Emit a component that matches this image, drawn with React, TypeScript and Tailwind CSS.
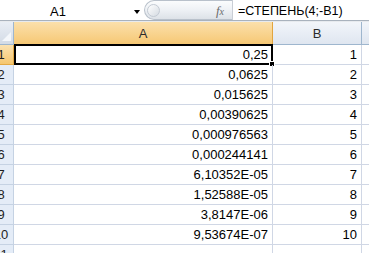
import React from "react";

const values = [
  "0,25",
  "0,0625",
  "0,015625",
  "0,00390625",
  "0,000976563",
  "0,000244141",
  "6,10352E-05",
  "1,52588E-05",
  "3,8147E-06",
  "9,53674E-07",
];

const RowHead = ({ n, active }: { n: number | string; active?: boolean }) => (
  <div
    className={`w-[14px] shrink-0 overflow-hidden border-r border-b ${
      active
        ? "border-[#e3a945] bg-gradient-to-b from-[#fbe2b0] to-[#f5c66e]"
        : "border-[#c5d2e3] bg-[#e4ecf7]"
    }`}
  >
    <div className="-ml-[12px] w-[26px] text-center text-[13px] leading-[19px] text-[#1e1e1e]">
      {n}
    </div>
  </div>
);

export default function App() {
  return (
    <div className="relative h-[253px] w-[369px] overflow-hidden bg-white font-['Liberation_Sans',Arial,sans-serif] text-black">
      {/* formula bar */}
      <div className="flex h-[21px] border-b border-[#a9b2bd] bg-white">
        <div className="relative flex w-[144px] shrink-0 items-center">
          <span className="pl-[50px] pt-[3px] text-[13px] leading-none">A1</span>
          <span className="absolute left-[134px] top-[10px] h-0 w-0 border-x-[3px] border-t-[4px] border-x-transparent border-t-black" />
        </div>
        <div className="relative flex w-[88px] shrink-0 items-center">
          <div className="flex h-[20px] w-full items-center rounded-l-full border border-r-0 border-[#b9c1cb] bg-gradient-to-b from-[#fbfcfd] via-[#eef1f5] to-[#dde2e8]">
            <span className="ml-[2px] h-[13px] w-[13px] rounded-full border border-[#c3cad3] bg-gradient-to-br from-white to-[#d5dbe2]" />
            <span className="ml-auto mr-[8px] font-['Liberation_Serif',serif] text-[13px] italic leading-none text-[#6b6b6b]">
              f<span className="text-[10px]">x</span>
            </span>
          </div>
        </div>
        <div className="flex flex-1 items-center border-l border-[#c9ced5] pl-[5px]">
          <span className="pt-[2px] text-[12.5px] leading-none">=СТЕПЕНЬ(4;-B1)</span>
        </div>
      </div>
      <div className="h-[1px] bg-[#e7eaee]" />

      {/* header row */}
      <div className="flex h-[23px]">
        <div className="relative w-[14px] shrink-0 border-r border-b border-[#9eb6ce] bg-gradient-to-b from-[#e9eef5] to-[#d3dbe6]">
          <span className="absolute bottom-[3px] right-[2px] h-0 w-0 border-l-[9px] border-t-[9px] border-l-transparent border-t-transparent border-b-0 border-r-[9px] border-r-[#f4f7fb]" />
        </div>
        <div className="flex w-[259px] shrink-0 items-end justify-center border-r border-b border-[#e2a53f] bg-gradient-to-b from-[#fbe0ab] to-[#f6c874] pb-[4px] text-[13px] leading-none text-[#2b2b2b]">
          A
        </div>
        <div className="flex w-[89px] shrink-0 items-end justify-center border-r border-b border-[#9eb6ce] bg-gradient-to-b from-[#f2f5fa] to-[#dfe6f0] pb-[4px] text-[13px] leading-none text-[#2b2b2b]">
          B
        </div>
        <div className="flex-1 border-b border-[#9eb6ce] bg-gradient-to-b from-[#f2f5fa] to-[#dfe6f0]" />
      </div>

      {/* rows */}
      {values.map((v, i) => (
        <div key={i} className="flex h-[20px]">
          <RowHead n={i + 1} active={i === 0} />
          <div className="relative w-[259px] shrink-0 border-r border-b border-[#d0d7e5] pr-[4px] text-right text-[13px] leading-[20px]">
            {v}
            {i === 0 && (
              <>
                <div className="absolute left-0 top-[-1px] h-[21px] w-[259px] border-2 border-black" />
                <div className="absolute left-[255px] top-[16px] h-[6px] w-[6px] border border-white bg-black" />
              </>
            )}
          </div>
          <div className="w-[89px] shrink-0 border-r border-b border-[#d0d7e5] pr-[4px] text-right text-[13px] leading-[20px]">
            {i + 1}
          </div>
          <div className="flex-1 border-b border-[#d0d7e5]" />
        </div>
      ))}
      <div className="flex h-[20px]">
        <RowHead n={11} />
        <div className="w-[259px] shrink-0 border-r border-[#d0d7e5]" />
        <div className="w-[89px] shrink-0 border-r border-[#d0d7e5]" />
      </div>
    </div>
  );
}
